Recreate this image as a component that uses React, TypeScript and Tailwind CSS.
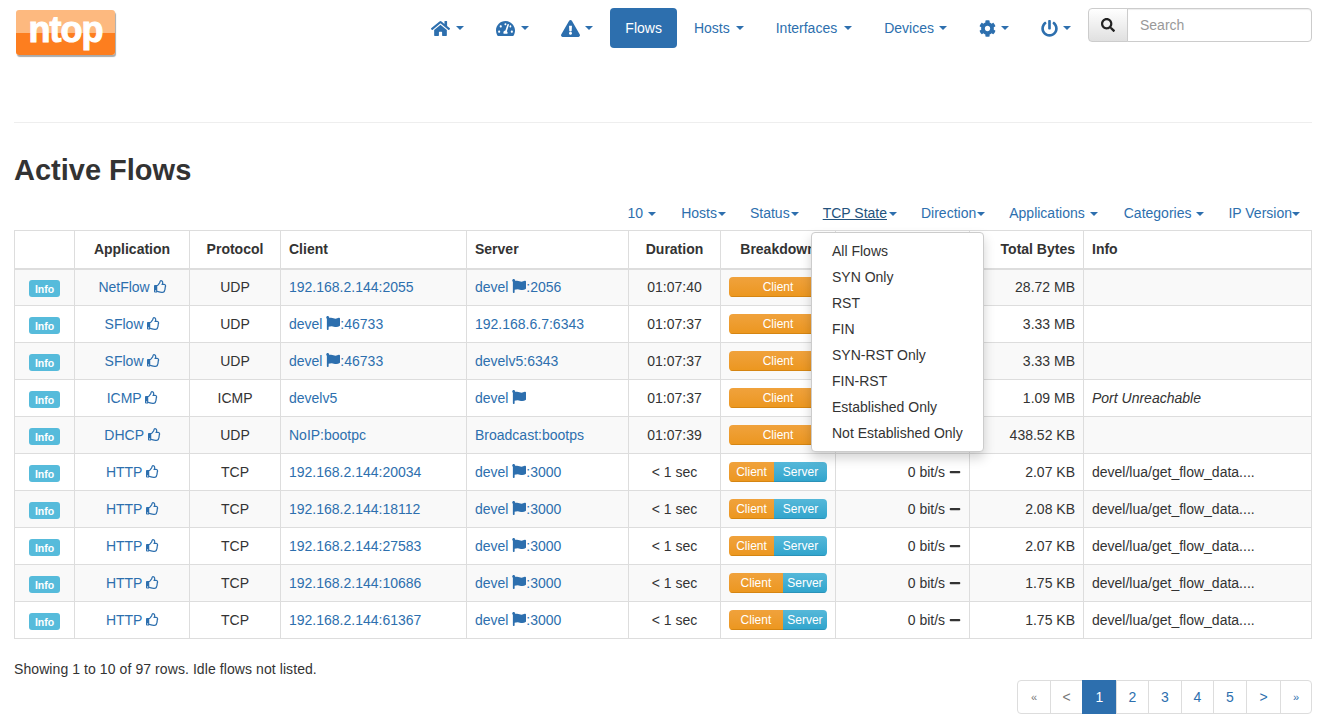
import { FaHome, FaTachometerAlt, FaExclamationTriangle, FaCog, FaPowerOff, FaSearch, FaRegThumbsUp, FaFlag, FaMinus } from 'react-icons/fa';
import type { ReactNode } from 'react';

interface Flow {
  app: string;
  proto: string;
  client: ReactNode;
  server: ReactNode;
  duration: string;
  clientPct: number;
  thpt: boolean;
  bytes: string;
  info: ReactNode;
}

function Caret({ gap = 'ml-[6px]' }: { gap?: string }) {
  return (
    <span
      className={`inline-block w-0 h-0 align-middle border-x-[4px] border-t-[4px] border-x-transparent border-t-[#2d6fae] ${gap}`}
    />
  );
}

function NavItem({ children, active }: { children: ReactNode; active?: boolean }) {
  return (
    <a
      className={`flex items-center h-[40px] px-[15px] rounded-[4px] ${active ? 'bg-[#2d6fae] text-white' : 'text-[#2d6fae]'}`}
    >
      {children}
    </a>
  );
}

function Host({ name, port }: { name: string; port?: string }) {
  return (
    <a className="text-[#2d6fae]">
      {name} <FaFlag className="inline-block text-[14px] align-[-1px]" />
      {port ? `:${port}` : ''}
    </a>
  );
}

const link = (text: string) => <a className="text-[#2d6fae]">{text}</a>;

const flows: Flow[] = [
  { app: 'NetFlow', proto: 'UDP', client: link('192.168.2.144:2055'), server: <Host name="devel" port="2056" />, duration: '01:07:40', clientPct: 100, thpt: false, bytes: '28.72 MB', info: '' },
  { app: 'SFlow', proto: 'UDP', client: <Host name="devel" port="46733" />, server: link('192.168.6.7:6343'), duration: '01:07:37', clientPct: 100, thpt: false, bytes: '3.33 MB', info: '' },
  { app: 'SFlow', proto: 'UDP', client: <Host name="devel" port="46733" />, server: link('develv5:6343'), duration: '01:07:37', clientPct: 100, thpt: false, bytes: '3.33 MB', info: '' },
  { app: 'ICMP', proto: 'ICMP', client: link('develv5'), server: <Host name="devel" />, duration: '01:07:37', clientPct: 100, thpt: false, bytes: '1.09 MB', info: <i>Port Unreachable</i> },
  { app: 'DHCP', proto: 'UDP', client: link('NoIP:bootpc'), server: link('Broadcast:bootps'), duration: '01:07:39', clientPct: 100, thpt: false, bytes: '438.52 KB', info: '' },
  { app: 'HTTP', proto: 'TCP', client: link('192.168.2.144:20034'), server: <Host name="devel" port="3000" />, duration: '< 1 sec', clientPct: 46, thpt: true, bytes: '2.07 KB', info: 'devel/lua/get_flow_data....' },
  { app: 'HTTP', proto: 'TCP', client: link('192.168.2.144:18112'), server: <Host name="devel" port="3000" />, duration: '< 1 sec', clientPct: 46, thpt: true, bytes: '2.08 KB', info: 'devel/lua/get_flow_data....' },
  { app: 'HTTP', proto: 'TCP', client: link('192.168.2.144:27583'), server: <Host name="devel" port="3000" />, duration: '< 1 sec', clientPct: 46, thpt: true, bytes: '2.07 KB', info: 'devel/lua/get_flow_data....' },
  { app: 'HTTP', proto: 'TCP', client: link('192.168.2.144:10686'), server: <Host name="devel" port="3000" />, duration: '< 1 sec', clientPct: 55, thpt: true, bytes: '1.75 KB', info: 'devel/lua/get_flow_data....' },
  { app: 'HTTP', proto: 'TCP', client: link('192.168.2.144:61367'), server: <Host name="devel" port="3000" />, duration: '< 1 sec', clientPct: 55, thpt: true, bytes: '1.75 KB', info: 'devel/lua/get_flow_data....' },
];

const cell = 'h-[37px] border border-[#ddd] px-[8px] py-0 leading-[20px]';
const head = 'h-[38px] border border-[#ddd] border-b-2 px-[8px] py-0 leading-[20px] font-bold';

const tools: [string, string][] = [
  ['10', 'ml-[5px] mr-px'],
  ['Hosts', 'ml-px'],
  ['Status', 'ml-px'],
  ['TCP State', 'ml-[2px]'],
  ['Direction', 'ml-px'],
  ['Applications', 'ml-[5px] mr-[2px]'],
  ['Categories', 'ml-[5px]'],
  ['IP Version', 'ml-0'],
];

const tcpStates = ['All Flows', 'SYN Only', 'RST', 'FIN', 'SYN-RST Only', 'FIN-RST', 'Established Only', 'Not Established Only'];

function Breakdown({ pct }: { pct: number }) {
  return (
    <div className="flex h-[20px] rounded-[4px] overflow-hidden text-[12px] leading-[20px] text-white">
      <div
        className="text-center bg-gradient-to-b from-[#f0a23c] to-[#ec971f] border-b border-[#d58512]"
        style={{ width: `${pct}%` }}
      >
        Client
      </div>
      {pct < 100 && (
        <div className="flex-1 text-center bg-gradient-to-b from-[#55b8d9] to-[#31a5cd] border-b border-[#2b92b8]">
          Server
        </div>
      )}
    </div>
  );
}

export default function App() {
  return (
    <div className="h-[719px] overflow-hidden bg-white pl-[14px] pr-[10px] text-[14px] text-[#333] [font-family:Liberation_Sans,Arial,sans-serif]">
      <div className="relative h-[123px] border-b border-[#eee]">
        <div className="absolute left-[2px] top-[10px] w-[99px] h-[45px] rounded-[3px] overflow-hidden shadow-[1px_2px_1px_#aaa]">
          <div className="h-[23px] bg-[#fdb97f]" />
          <div className="h-[22px] bg-[#fd7e1f]" />
          <span className="absolute inset-0 text-center text-white font-bold text-[36px] leading-[40px] tracking-[-1px] [-webkit-text-stroke:1px_white]">
            ntop
          </span>
        </div>
        <div className="flex justify-end items-start pt-[8px]">
          <nav className="flex gap-[2px]">
            <NavItem><FaHome className="w-[19px] h-[17px]" /><Caret /></NavItem>
            <NavItem><FaTachometerAlt className="w-[19px] h-[17px]" /><Caret /></NavItem>
            <NavItem><FaExclamationTriangle className="w-[19px] h-[17px]" /><Caret gap="ml-[5px]" /></NavItem>
            <NavItem active>Flows</NavItem>
            <NavItem>Hosts<Caret /></NavItem>
            <NavItem>Interfaces<Caret gap="ml-[7px]" /></NavItem>
            <NavItem>Devices<Caret gap="ml-[5px]" /></NavItem>
            <NavItem><FaCog className="text-[17px]" /><Caret gap="ml-[5px]" /></NavItem>
            <NavItem><FaPowerOff className="text-[17px]" /><Caret gap="ml-[5px]" /></NavItem>
          </nav>
          <div className="flex ml-[2px] w-[224px] h-[34px]">
            <button className="flex items-center justify-center w-[40px] border border-[#ccc] rounded-l-[4px] bg-gradient-to-b from-white to-[#e0e0e0] text-[#222]">
              <FaSearch className="text-[14px]" />
            </button>
            <div className="flex-1 flex items-center -ml-px border border-[#ccc] rounded-r-[4px] pl-[12px] text-[#999] shadow-[inset_0_1px_1px_rgba(0,0,0,0.075)]">
              Search
            </div>
          </div>
        </div>
      </div>

      <h1 className="mt-[31px] text-[29px] leading-[33px] font-bold text-[#333]">Active Flows</h1>

      <div className="relative">
        <div className="flex justify-end mt-[12px] h-[31px] text-[#2d6fae] leading-[20px]">
          {tools.map(([label, gap]) => (
            <a key={label} className="px-[12px] pt-[4px]">
              <span className={label === 'TCP State' ? 'underline text-[#23527c]' : ''}>{label}</span>
              <Caret gap={gap} />
            </a>
          ))}
        </div>

        <div className="absolute left-[797px] top-[33px] z-10 w-[173px] py-[5px] bg-white border border-[#ccc] rounded-[4px] shadow-[0_6px_12px_rgba(0,0,0,0.175)]">
          {tcpStates.map((s) => (
            <div key={s} className="h-[26px] px-[20px] leading-[26px] text-[#333] whitespace-nowrap">{s}</div>
          ))}
        </div>

        <table className="w-[1297px] table-fixed border-collapse">
          <colgroup>
            <col className="w-[60px]" />
            <col className="w-[115px]" />
            <col className="w-[91px]" />
            <col className="w-[186px]" />
            <col className="w-[162px]" />
            <col className="w-[92px]" />
            <col className="w-[115px]" />
            <col className="w-[134px]" />
            <col className="w-[114px]" />
            <col className="w-[228px]" />
          </colgroup>
          <thead>
            <tr>
              <th className={head}></th>
              <th className={`${head} text-center`}>Application</th>
              <th className={`${head} text-center`}>Protocol</th>
              <th className={`${head} text-left`}>Client</th>
              <th className={`${head} text-left`}>Server</th>
              <th className={`${head} text-center`}>Duration</th>
              <th className={`${head} text-center`}>Breakdown</th>
              <th className={head}></th>
              <th className={`${head} text-right`}>Total Bytes</th>
              <th className={`${head} text-left`}>Info</th>
            </tr>
          </thead>
          <tbody>
            {flows.map((f, i) => (
              <tr key={i} className={i % 2 === 0 ? 'bg-[#f9f9f9]' : 'bg-white'}>
                <td className={`${cell} text-center`}>
                  <span className="block mx-auto mt-[2px] w-[31px] h-[17px] rounded-[3px] bg-[#56bbdb] text-white font-bold text-[10.5px] leading-[18px]">
                    Info
                  </span>
                </td>
                <td className={`${cell} text-center !pl-[9px]`}>
                  <a className="text-[#2d6fae]">
                    {f.app} <FaRegThumbsUp className="inline-block text-[13px] align-[-1px]" />
                  </a>
                </td>
                <td className={`${cell} text-center`}>{f.proto}</td>
                <td className={cell}>{f.client}</td>
                <td className={cell}>{f.server}</td>
                <td className={`${cell} text-center`}>{f.duration}</td>
                <td className={cell}><Breakdown pct={f.clientPct} /></td>
                <td className={`${cell} text-right`}>
                  {f.thpt ? (
                    <>0 bit/s <FaMinus className="inline-block text-[12px] align-[-1px]" /></>
                  ) : null}
                </td>
                <td className={`${cell} text-right`}>{f.bytes}</td>
                <td className={cell}>{f.info}</td>
              </tr>
            ))}
          </tbody>
        </table>

        <div className="mt-[20px] leading-[20px] tracking-[0.08px]">Showing 1 to 10 of 97 rows. Idle flows not listed.</div>

        <div className="flex justify-end mt-[1px]">
          <div className="flex h-[34px] leading-[32px] text-center text-[#2d6fae]">
            <span className="w-[34px] border border-[#ddd] rounded-l-[4px] text-[#777] text-[11px]">«</span>
            <span className="w-[33px] -ml-px border border-[#ddd] text-[#777]">&lt;</span>
            <span className="w-[35px] -ml-px border border-[#2d6fae] bg-[#2d6fae] text-white">1</span>
            <span className="w-[33px] -ml-px border border-[#ddd]">2</span>
            <span className="w-[34px] -ml-px border border-[#ddd]">3</span>
            <span className="w-[33px] -ml-px border border-[#ddd]">4</span>
            <span className="w-[34px] -ml-px border border-[#ddd]">5</span>
            <span className="w-[35px] -ml-px border border-[#ddd]">&gt;</span>
            <span className="w-[32px] -ml-px border border-[#ddd] rounded-r-[4px] text-[11px]">»</span>
          </div>
        </div>
      </div>
    </div>
  );
}
